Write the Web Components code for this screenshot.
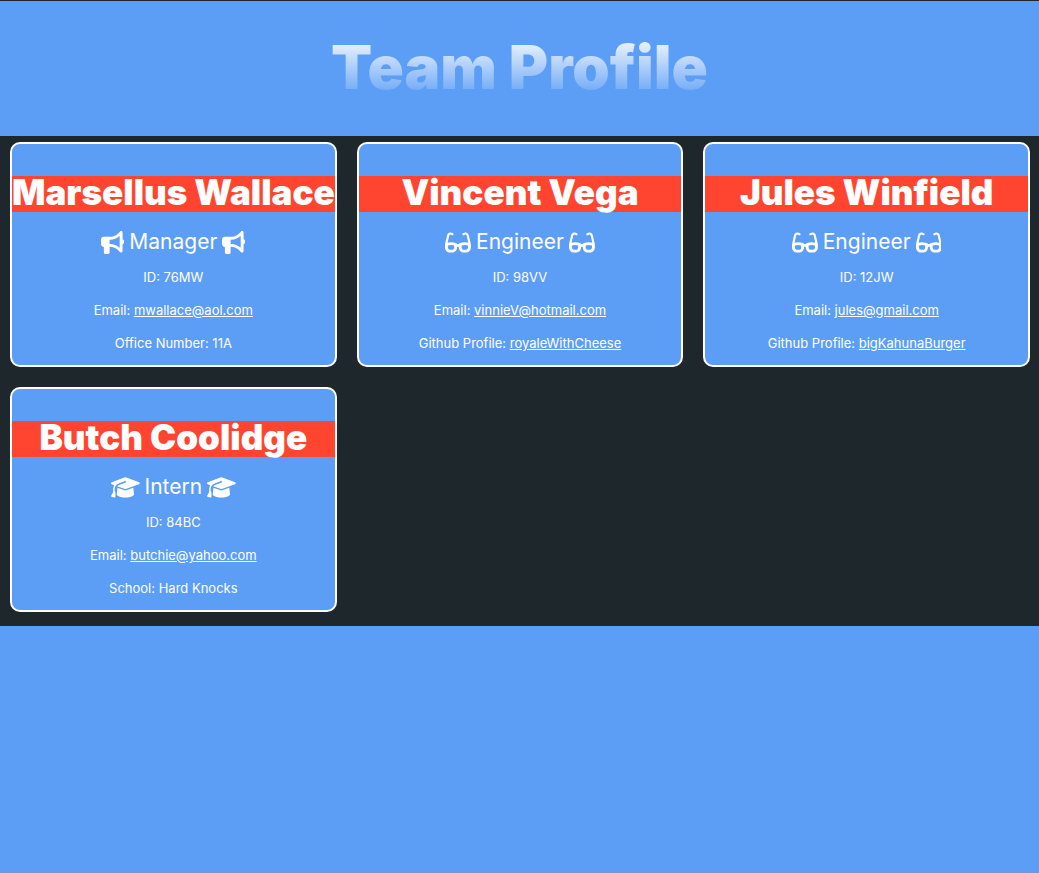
<!DOCTYPE html>
<html lang="en">
<head>
<meta charset="utf-8">
<meta name="viewport" content="width=device-width, initial-scale=1">
<title>Team Profile</title>
<style>
  :root {
    --blue: #5c9ef6;
    --dark: #1e272b;
    --red: #ff4530;
  }
  body {
    margin: 0;
    background: var(--blue);
    color: #fff;
    font: 13px/17px Inter, "Liberation Sans", sans-serif;
  }
</style>
</head>
<body>
<page-header>Team Profile</page-header>
<team-grid>
  <member-card name="Marsellus Wallace" role-name="Manager">
    <member-detail label="ID">76MW</member-detail>
    <member-detail label="Email" href="mailto:mwallace@aol.com">mwallace@aol.com</member-detail>
    <member-detail label="Office Number">11A</member-detail>
  </member-card>
  <member-card name="Vincent Vega" role-name="Engineer">
    <member-detail label="ID">98VV</member-detail>
    <member-detail label="Email" href="mailto:vinnieV@hotmail.com">vinnieV@hotmail.com</member-detail>
    <member-detail label="Github Profile" href="https://github.com/royaleWithCheese">royaleWithCheese</member-detail>
  </member-card>
  <member-card name="Jules Winfield" role-name="Engineer">
    <member-detail label="ID">12JW</member-detail>
    <member-detail label="Email" href="mailto:jules@gmail.com">jules@gmail.com</member-detail>
    <member-detail label="Github Profile" href="https://github.com/bigKahunaBurger">bigKahunaBurger</member-detail>
  </member-card>
  <member-card name="Butch Coolidge" role-name="Intern">
    <member-detail label="ID">84BC</member-detail>
    <member-detail label="Email" href="mailto:butchie@yahoo.com">butchie@yahoo.com</member-detail>
    <member-detail label="School">Hard Knocks</member-detail>
  </member-card>
</team-grid>

<script>
const ICONS = {
  Manager: [512, "M480 32c0-12.9-7.8-24.6-19.8-29.6s-25.7-2.2-34.9 6.9L381.7 53c-48 48-113.1 75-181 75H192 160 64c-35.3 0-64 28.7-64 64v96c0 35.3 28.7 64 64 64l0 128c0 17.7 14.3 32 32 32h64c17.7 0 32-14.3 32-32V352l8.7 0c67.9 0 133 27 181 75l43.6 43.6c9.2 9.2 22.9 11.9 34.9 6.9s19.8-16.6 19.8-29.6V300.4c18.6-8.8 32-32.5 32-60.4s-13.4-51.6-32-60.4V32zm-64 76.7V240 371.3C357.2 317.8 280.5 288 200.7 288H192V192h8.7c79.8 0 156.5-29.8 215.3-83.3z"],
  Engineer: [576, "M118.6 80c-11.5 0-21.4 7.9-24 19.1L57 260.3c20.5-6.2 48.3-12.3 78.7-12.3c32.3 0 61.8 6.9 82.8 13.5c10.6 3.3 19.3 6.7 25.4 9.2c3.1 1.3 5.5 2.4 7.3 3.2c.9 .4 1.6 .7 2.1 1l.6 .3 .2 .1c5.8 2.9 10.4 7.3 13.5 12.7h40.6c3.1-5.3 7.7-9.8 13.5-12.7l.2-.1 .6-.3c.5-.2 1.2-.6 2.1-1c1.8-.8 4.2-1.9 7.3-3.2c6.1-2.6 14.8-5.9 25.4-9.2c21-6.6 50.4-13.5 82.8-13.5c30.4 0 58.2 6.1 78.7 12.3L481.4 99.1c-2.6-11.2-12.6-19.1-24-19.1c-3.1 0-6.2 .6-9.2 1.8L416.9 94.3c-12.3 4.9-26.3-1.1-31.2-13.4s1.1-26.3 13.4-31.2l31.3-12.5c8.6-3.4 17.7-5.2 27-5.2c33.8 0 63.1 23.3 70.8 56.2l43.9 188c1.7 7.3 2.9 14.7 3.5 22.1c.3 1.9 .5 3.8 .5 5.7v6.7V352v16c0 61.9-50.1 112-112 112H419.7c-59.4 0-108.5-46.4-111.8-105.8L306.6 352H269.4l-1.2 22.2C264.9 433.6 215.8 480 156.3 480H112C50.1 480 0 429.9 0 368V352 310.7 304c0-1.9 .2-3.8 .5-5.7c.6-7.4 1.8-14.8 3.5-22.1l43.9-188C55.5 55.3 84.8 32 118.6 32c9.2 0 18.4 1.8 27 5.2l31.3 12.5c12.3 4.9 18.3 18.9 13.4 31.2s-18.9 18.3-31.2 13.4L127.8 81.8c-2.9-1.2-6-1.8-9.2-1.8zM64 325.4V368c0 26.5 21.5 48 48 48h44.3c25.5 0 46.5-19.9 47.9-45.3l2.5-45.6c-2.3-.8-4.9-1.7-7.5-2.5c-17.2-5.4-39.9-10.5-63.6-10.5c-23.7 0-46.2 5.1-63.2 10.5c-3.1 1-5.9 1.9-8.5 2.9zM512 368V325.4c-2.6-.9-5.5-1.9-8.5-2.9c-17-5.4-39.5-10.5-63.2-10.5c-23.7 0-46.4 5.1-63.6 10.5c-2.7 .8-5.2 1.7-7.5 2.5l2.5 45.6c1.4 25.4 22.5 45.3 47.9 45.3H464c26.5 0 48-21.5 48-48z"],
  Intern: [640, "M320 32c-8.1 0-16.1 1.4-23.7 4.1L15.8 137.4C6.3 140.9 0 149.9 0 160s6.3 19.1 15.8 22.6l57.9 20.9C57.3 229.3 48 259.8 48 291.9v28.1c0 28.4-10.8 57.7-22.3 80.8c-6.5 13-13.9 25.8-22.5 37.6C0 442.7-.9 448.3 .9 453.4s6 8.9 11.2 10.2l64 16c4.2 1.1 8.7 .3 12.4-2s6.3-6.1 7.1-10.4c8.6-42.8 4.3-81.2-2.1-108.7C90.3 344.3 86 329.8 80 316.5V291.9c0-30.2 10.2-58.7 27.9-81.5c12.9-15.5 29.6-28 49.2-35.7l157-61.7c8.2-3.2 17.5 .8 20.7 9s-.8 17.5-9 20.7l-157 61.7c-12.4 4.9-23.3 12.4-32.2 21.6l159.6 57.6c7.6 2.7 15.6 4.1 23.7 4.1s16.1-1.4 23.7-4.1L624.2 182.6c9.5-3.4 15.8-12.5 15.8-22.6s-6.3-19.1-15.8-22.6L343.7 36.1C336.1 33.4 328.1 32 320 32zM128 408c0 35.3 86 72 192 72s192-36.7 192-72L496.7 262.6 354.5 314c-11.1 4-22.8 6-34.5 6s-23.5-2-34.5-6L143.3 262.6 128 408z"]
};

class PageHeader extends HTMLElement {
  constructor() {
    super();
    this.attachShadow({ mode: "open" }).innerHTML = `
      <style>
        :host { display: block; border-top: 1px solid var(--dark); }
        header { display: flex; justify-content: center; padding: 32px 16px 35px; }
        h1 {
          margin: 0;
          font-size: 60px;
          line-height: 68px;
          font-weight: 900;
          text-align: center;
          color: transparent;
          background: linear-gradient(#fff, var(--blue));
          -webkit-background-clip: text;
          background-clip: text;
        }
      </style>
      <header><h1><slot></slot></h1></header>`;
  }
}
customElements.define("page-header", PageHeader);

class TeamGrid extends HTMLElement {
  constructor() {
    super();
    this.attachShadow({ mode: "open" }).innerHTML = `
      <style>
        :host { display: block; background: var(--dark); }
        main {
          display: grid;
          grid-template-columns: repeat(auto-fill, minmax(300px, 1fr));
          gap: 20px;
          padding: 6px 9px 14px 10px;
        }
      </style>
      <main><slot></slot></main>`;
  }
}
customElements.define("team-grid", TeamGrid);

class RoleIcon extends HTMLElement {
  connectedCallback() {
    if (this.shadowRoot) return;
    const [width, path] = ICONS[this.getAttribute("kind")];
    this.attachShadow({ mode: "open" }).innerHTML = `
      <style>
        :host { display: flex; }
        svg { display: block; height: 23px; fill: currentColor; }
      </style>
      <svg viewBox="0 0 ${width} 512" aria-hidden="true"><path d="${path}"/></svg>`;
  }
}
customElements.define("role-icon", RoleIcon);

class MemberDetail extends HTMLElement {
  connectedCallback() {
    if (this.shadowRoot) return;
    const href = this.getAttribute("href");
    const value = href ? `<a href="${href}"><slot></slot></a>` : "<slot></slot>";
    this.attachShadow({ mode: "open" }).innerHTML = `
      <style>
        :host { display: block; }
        p { margin: 0; }
        a { color: inherit; }
      </style>
      <p>${this.getAttribute("label")}: ${value}</p>`;
  }
}
customElements.define("member-detail", MemberDetail);

class MemberCard extends HTMLElement {
  connectedCallback() {
    if (this.shadowRoot) return;
    const role = this.getAttribute("role-name");
    this.attachShadow({ mode: "open" }).innerHTML = `
      <style>
        :host {
          display: block;
          box-sizing: border-box;
          padding: 32px 0 13px;
          border: 2px solid #fff;
          border-radius: 10px;
          background: var(--blue);
          text-align: center;
        }
        h2 {
          margin: 0;
          padding-bottom: 4px;
          background: var(--red);
          font-size: 35px;
          line-height: 32px;
          font-weight: 900;
          white-space: nowrap;
        }
        h3 {
          display: flex;
          justify-content: center;
          align-items: center;
          gap: 5px;
          margin: 16px 0 13px;
          font-size: 21px;
          line-height: 28px;
          font-weight: 400;
        }
        .details { display: grid; gap: 16px; }
      </style>
      <article>
        <h2>${this.getAttribute("name")}</h2>
        <h3><role-icon kind="${role}"></role-icon><span>${role}</span><role-icon kind="${role}"></role-icon></h3>
        <div class="details"><slot></slot></div>
      </article>`;
  }
}
customElements.define("member-card", MemberCard);
</script>
</body>
</html>
